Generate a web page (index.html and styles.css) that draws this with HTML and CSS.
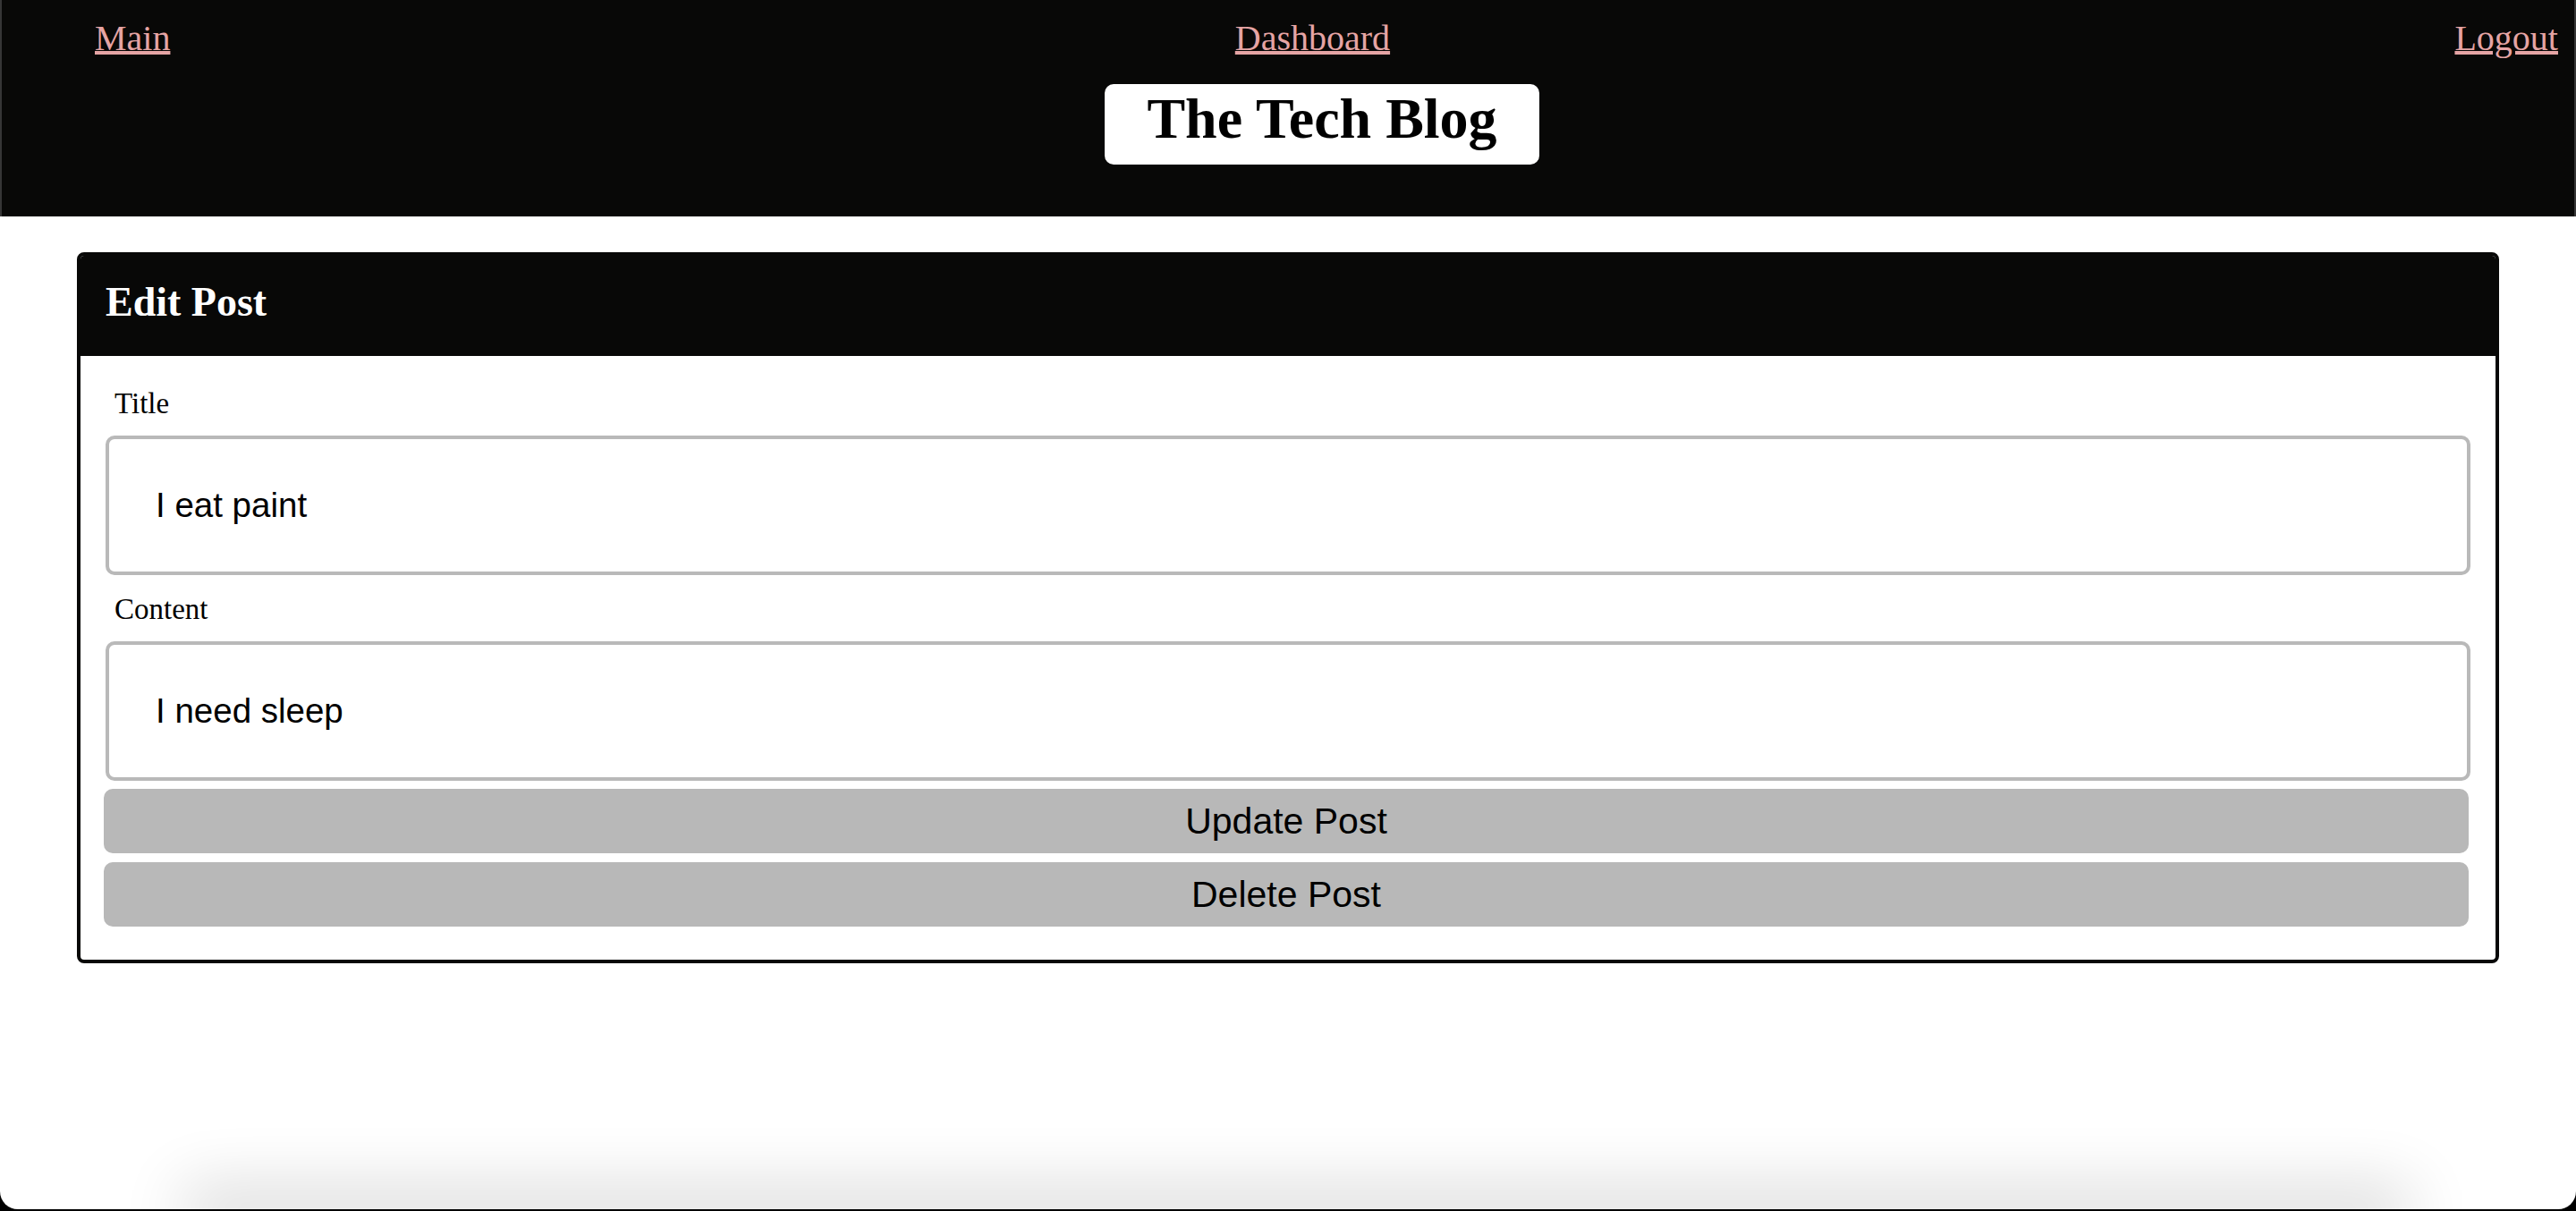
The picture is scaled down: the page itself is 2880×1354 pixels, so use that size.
FILE: index.html
```html
<!DOCTYPE html>
<html lang="en">
<head>
<meta charset="utf-8">
<title>The Tech Blog</title>
<link rel="stylesheet" href="styles.css">
</head>
<body>
<div class="page">
  <header class="site-header">
    <nav class="nav">
      <a class="nav-link" href="#">Main</a>
      <a class="nav-link" href="#">Dashboard</a>
      <a class="nav-link" href="#">Logout</a>
    </nav>
    <div class="brand-row">
      <h1 class="brand">The Tech Blog</h1>
    </div>
  </header>
  <main class="content">
    <section class="card">
      <h2 class="card-header">Edit Post</h2>
      <form class="card-body">
        <div class="field">
          <label class="field-label" for="post-title">Title</label>
          <input class="field-input" id="post-title" type="text" value="I eat paint">
        </div>
        <div class="field">
          <label class="field-label" for="post-content">Content</label>
          <input class="field-input" id="post-content" type="text" value="I need sleep">
        </div>
        <div class="actions">
          <button class="btn" type="button">Update Post</button>
          <button class="btn" type="button">Delete Post</button>
        </div>
      </form>
    </section>
  </main>
  <footer class="footer"></footer>
</div>
</body>
</html>
```
FILE: styles.css
```css
html {
  background: #000;
}

body {
  margin: 0;
}

.page {
  height: 1352px;
  background: #fff;
  border-radius: 0 0 20px 20px;
  overflow: hidden;
  display: flex;
  flex-direction: column;
}

.site-header {
  background: #080807;
  height: 242px;
  box-sizing: border-box;
  border-left: 2px solid #363636;
  border-right: 2px solid #363636;
  padding-top: 20px;
  flex-shrink: 0;
}

.nav {
  display: flex;
  justify-content: space-between;
  padding: 0 18px 0 104px;
  font: 40px/46px "Liberation Serif", "Times New Roman", serif;
}

.nav-link {
  color: #e5a4a4;
  text-decoration: underline;
  text-decoration-thickness: 4px;
  text-underline-offset: 1px;
}

.brand-row {
  display: flex;
  justify-content: center;
  padding-left: 76px;
  margin-top: 28px;
}

.brand {
  margin: 0;
  background: #fff;
  color: #000;
  border-radius: 10px;
  font: bold 64px/78px "Liberation Serif", "Times New Roman", serif;
  padding: 0 47px 12px;
}

.content {
  padding: 40px 86px 0;
}

.card {
  border: 4px solid #080807;
  border-radius: 8px;
  overflow: hidden;
}

.card-header {
  margin: 0;
  background: #080807;
  color: #fff;
  font: bold 46px/52px "Liberation Serif", "Times New Roman", serif;
  padding: 26px 28px 34px;
}

.card-body {
  display: flex;
  flex-direction: column;
  padding: 35px 30px 37px 26px;
  margin: 0;
}

.field {
  display: flex;
  flex-direction: column;
}

.field + .field {
  margin-top: 20px;
}

.field-label {
  font: 33px/37px "Liberation Serif", "Times New Roman", serif;
  color: #000;
  margin: 0 0 17px 12px;
}

.field-input {
  height: 156px;
  box-sizing: border-box;
  border: 4px solid #b9b9b9;
  border-radius: 10px;
  margin: 0 -2px 0 2px;
  padding: 0 52px;
  font: 38.5px "Liberation Sans", Arial, sans-serif;
  color: #000;
  background: #fff;
  outline: none;
}

.actions {
  display: flex;
  flex-direction: column;
  gap: 10px;
  margin-top: 9px;
}

.btn {
  height: 72px;
  width: 100%;
  border: 0;
  border-radius: 10px;
  background: #b8b8b8;
  color: #000;
  font: 41px "Liberation Sans", Arial, sans-serif;
  padding: 0;
}

.footer {
  margin: auto 210px 0 230px;
  height: 0;
  flex-shrink: 0;
  box-shadow: 0 0 70px 25px rgba(0, 0, 0, 0.16);
}
```
